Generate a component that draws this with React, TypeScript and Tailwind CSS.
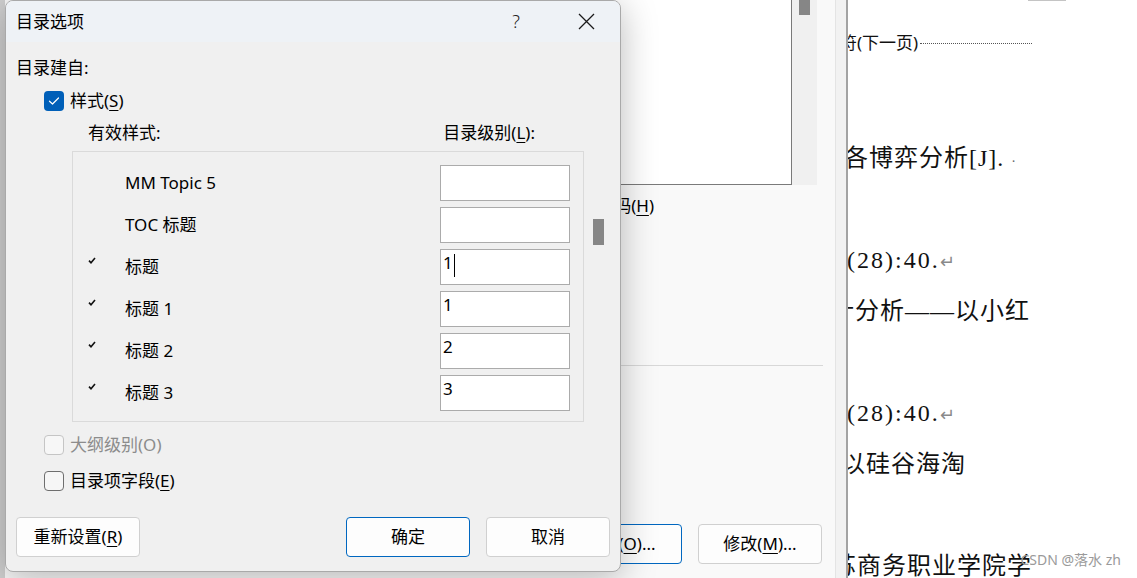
import React from "react";

const ui = "font-['Noto_Sans','Noto_Sans_CJK_SC',sans-serif]";
const doc = "font-['Liberation_Serif','Noto_Sans_CJK_SC',serif]";

interface StyleRow {
    name: string;
    level: string;
    used: boolean;
    caret?: boolean;
}

const rows: StyleRow[] = [
    { name: "MM Topic 5", level: "", used: false },
    { name: "TOC 标题", level: "", used: false },
    { name: "标题", level: "1", used: true, caret: true },
    { name: "标题 1", level: "1", used: true },
    { name: "标题 2", level: "2", used: true },
    { name: "标题 3", level: "3", used: true },
];

function CheckBox({ state }: { state: "on" | "off" | "disabled" }) {
    if (state === "on") {
        return (
            <div className="w-[20px] h-[20px] rounded-[4px] bg-[#005fb8] flex items-center justify-center">
                <svg width="12" height="10" viewBox="0 0 12 10" fill="none">
                    <path d="M1.5 5.2 L4.5 8 L10.5 2" stroke="white" strokeWidth="1.2" strokeLinecap="round" strokeLinejoin="round" />
                </svg>
            </div>
        );
    }
    if (state === "disabled") {
        return <div className="w-[20px] h-[20px] rounded-[4px] border border-[#c5c5c5] bg-[#f7f7f7]" />;
    }
    return <div className="w-[20px] h-[20px] rounded-[4px] border border-[#6e6e6e] bg-[#f6f6f6]" />;
}

function Btn({ children, primary, className = "" }: { children: React.ReactNode; primary?: boolean; className?: string }) {
    return (
        <div
            className={`h-[40px] w-[124px] rounded-[4px] border bg-[#fdfdfd] flex items-center justify-center text-[17px] leading-[24px] text-black ${
                primary ? "border-[#0067c0]" : "border-[#d0d0d0]"
            } ${className}`}
        >
            {children}
        </div>
    );
}

function TocDialog() {
    return (
        <div className={`absolute left-[5px] top-0 w-[616px] rounded-lg border border-[#a9a9a9] bg-[#f0f0f0] overflow-hidden shadow-[0_6px_36px_rgba(0,0,0,0.28)] ${ui} text-black`}>
            {/* title bar */}
            <div className="h-[41px] bg-[#eef2f6] flex items-center pl-[10px]">
                <span className="text-[17px] leading-[24px]">目录选项</span>
                <div className="ml-auto flex items-center">
                    <div className="w-[46px] h-[41px] flex items-center justify-center text-[18px] font-light text-[#222]">?</div>
                    <div className="w-[24px]" />
                    <div className="w-[46px] h-[41px] flex items-center justify-center">
                        <svg width="17" height="17" viewBox="0 0 17 17" fill="none">
                            <path d="M1 1 L16 16 M16 1 L1 16" stroke="#1a1a1a" strokeWidth="1.3" />
                        </svg>
                    </div>
                    <div className="w-[11px]" />
                </div>
            </div>

            <div className="flex flex-col px-[10px] pb-[14px] text-[17px] leading-[24px]">
                <div className="mt-[14px]">目录建自:</div>

                <div className="mt-[9px] ml-[28px] flex items-center gap-[6px] h-[24px]">
                    <CheckBox state="on" />
                    <span>
                        样式(<span className="underline underline-offset-[3px]">S</span>)
                    </span>
                </div>

                <div className="mt-[8px] flex h-[24px]">
                    <span className="ml-[72px]">有效样式:</span>
                    <span className="ml-auto mr-[75px]">
                        目录级别(<span className="underline underline-offset-[3px]">L</span>):
                    </span>
                </div>

                <div className="mt-[6px] flex items-start">
                    <div className="ml-[56px] w-[512px] h-[271px] border border-[#dadada] bg-[#f0f0f0] pt-[13px] pr-[13px] flex flex-col gap-[6px]">
                        {rows.map((r) => (
                            <div key={r.name} className="flex h-[36px]">
                                <div className="w-[15px]" />
                                <div className="w-[8px] mt-[8px]">
                                    {r.used && (
                                        <svg width="8" height="7" viewBox="0 0 8 7" fill="none">
                                            <path d="M1 3.6 L3 5.8 L7 1" stroke="#111" strokeWidth="1.6" />
                                        </svg>
                                    )}
                                </div>
                                <div className="ml-[29px] flex-1 flex items-center">{r.name}</div>
                                <div className="w-[130px] h-[36px] border border-[#ababab] bg-white px-[2px] flex items-start">
                                    <span className="leading-[26px]">{r.level}</span>
                                    {r.caret && <span className="ml-[1px] mt-[4px] w-px h-[23px] bg-black" />}
                                </div>
                            </div>
                        ))}
                    </div>
                    <div className="ml-[9px] mt-[68px] w-[11px] h-[26px] bg-[#868686]" />
                </div>

                <div className="mt-[11px] ml-[28px] flex items-center gap-[6px] h-[24px] text-[#8c8c8c]">
                    <CheckBox state="disabled" />
                    <span>大纲级别(O)</span>
                </div>

                <div className="mt-[12px] ml-[28px] flex items-center gap-[6px] h-[24px]">
                    <CheckBox state="off" />
                    <span>
                        目录项字段(<span className="underline underline-offset-[3px]">E</span>)
                    </span>
                </div>

                <div className="mt-[24px] flex">
                    <Btn>
                        重新设置(<span className="underline underline-offset-[3px]">R</span>)
                    </Btn>
                    <Btn primary className="ml-auto">
                        确定
                    </Btn>
                    <Btn className="ml-[16px]">取消</Btn>
                </div>
            </div>
        </div>
    );
}

function ParentDialog() {
    return (
        <div className={`w-[848px] h-full flex bg-[#f9f9f9] ${ui} text-black`}>
            <div className="w-[5px] h-full bg-[#d0d0d0]" />
            <div className="flex-1 flex flex-col border-r border-[#e4e4e4] text-[17px] leading-[24px]">
                <div className="ml-[555px] w-[257px] h-[185px] flex">
                    <div className="flex-1 bg-white border-r border-b border-[#7a7a7a]" />
                    <div className="w-[25px] bg-[#f0f0f0] pl-[7px]">
                        <div className="w-[11px] h-[15px] bg-[#868686]" />
                    </div>
                </div>
                <div className="mt-[9px] w-[649px] text-right">
                    使用超链接而不是页码(<span className="underline underline-offset-[3px]">H</span>)
                </div>
                <div className="mt-[147px] ml-[535px] w-[283px] border-t border-[#d8d8d8]" />
                <div className="mt-[158px] flex">
                    <Btn primary className="ml-[553px]">
                        选项(<span className="underline underline-offset-[3px]">O</span>)...
                    </Btn>
                    <Btn className="ml-[16px]">
                        修改(<span className="underline underline-offset-[3px]">M</span>)...
                    </Btn>
                </div>
            </div>
            <div className="w-[12px] h-full bg-[#f2f2f2] border-r-2 border-[#a3a3a3]" />
        </div>
    );
}

function Document() {
    return (
        <div className={`flex-1 h-full bg-white overflow-hidden flex flex-col text-[#111] ${doc}`}>
            <div className="h-[2px] ml-[180px] w-[38px] border-x border-b border-[#c4c4c4]" />
            <div className={`mt-[30px] flex items-center h-[24px] text-[17px] ${ui}`}>
                <span className="ml-[-8px] whitespace-nowrap">符(下一页)</span>
                <div className="ml-[2px] w-[112px] border-t border-dotted border-[#555]" />
            </div>
            <div className="mt-[78px] flex flex-col text-[24px] leading-[51px]">
                <div className="h-[51px] whitespace-nowrap ml-[-4px] tracking-[1px]">
                    各博弈分析[J]. <span className="text-[14px] text-[#666]">·</span>
                </div>
                <div className="h-[51px]" />
                <div className="h-[51px] whitespace-nowrap ml-[-1px] tracking-[2px]">
                    (28):40.<span className="text-[18px] text-[#8a8a8a] tracking-normal">↵</span>
                </div>
                <div className="h-[51px] whitespace-nowrap ml-[-18px] tracking-[1px]">计分析——以小红</div>
                <div className="h-[51px]" />
                <div className="h-[51px] whitespace-nowrap ml-[-1px] tracking-[2px]">
                    (28):40.<span className="text-[18px] text-[#8a8a8a] tracking-normal">↵</span>
                </div>
                <div className="h-[51px] whitespace-nowrap ml-[-7px] tracking-[1px]">以硅谷海淘</div>
                <div className="h-[51px]" />
                <div className="h-[51px] whitespace-nowrap ml-[-16px] tracking-[1px]">苏商务职业学院学</div>
            </div>
        </div>
    );
}

export default function App() {
    return (
        <div className="relative w-[1137px] h-[578px] overflow-hidden flex bg-white">
            <ParentDialog />
            <Document />
            <TocDialog />
            <div className={`absolute right-[16px] bottom-[8px] text-[14px] text-[#9a9a9a] ${ui}`}>CSDN @落水 zh</div>
        </div>
    );
}
